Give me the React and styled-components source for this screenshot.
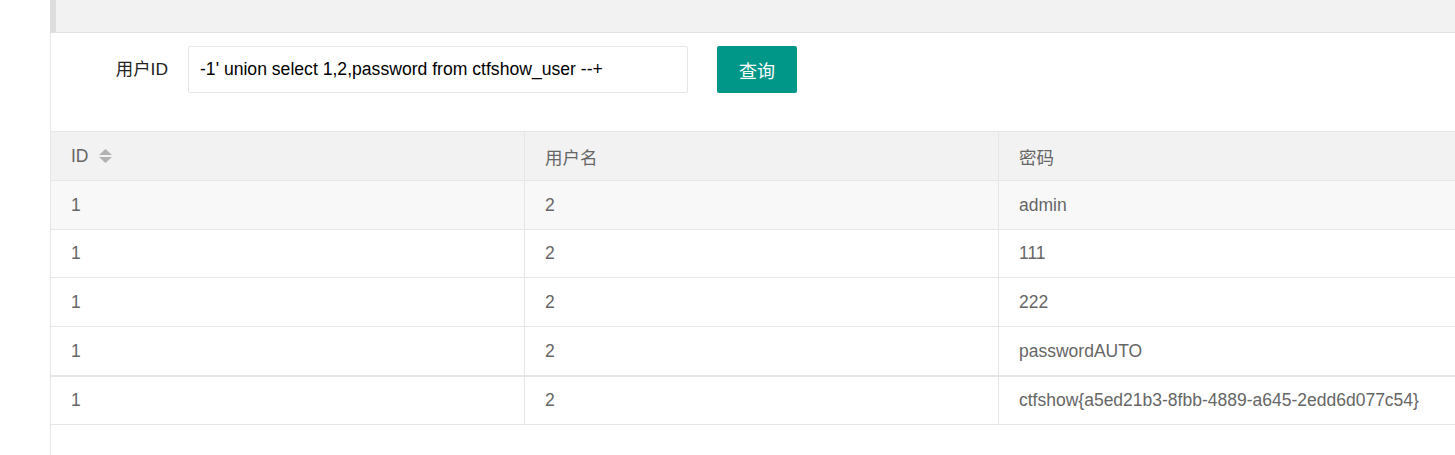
import React from 'react';
import styled, { createGlobalStyle } from 'styled-components';

const GlobalStyle = createGlobalStyle`
  html, body {
    margin: 0;
    padding: 0;
    background: #fff;
    overflow: hidden;
  }
  body {
    font-family: "Liberation Sans", Arial, "Noto Sans CJK SC", sans-serif;
  }
`;

const Page = styled.div`
  margin-left: 50px;
  height: 455px;
  border-left: 1px solid #e6e6e6;
  width: 1500px;
`;

const Quote = styled.div`
  height: 32px;
  background: #f2f2f2;
  border-left: 6px solid #dddddd;
  border-bottom: 1px solid #e2e2e2;
  margin-left: -1px;
`;

const Form = styled.form`
  display: flex;
  align-items: flex-start;
  height: 98px;
  padding-top: 13px;
  box-sizing: border-box;
`;

const Label = styled.label`
  width: 137px;
  height: 47px;
  line-height: 47px;
  text-align: right;
  font-size: 17.4px;
  color: #222;
  padding-right: 20px;
  box-sizing: border-box;
`;

const Input = styled.input`
  width: 500px;
  height: 47px;
  box-sizing: border-box;
  border: 1px solid #e6e6e6;
  border-radius: 2px;
  padding: 0 11px;
  font-family: inherit;
  font-size: 17.6px;
  color: #000;
  outline: none;
`;

const Button = styled.button`
  margin-left: 29px;
  width: 80px;
  height: 47px;
  border: none;
  border-radius: 2px;
  background: #009688;
  color: #fff;
  font-family: inherit;
  font-size: 18px;
  cursor: pointer;
`;

const Table = styled.table`
  border-collapse: collapse;
  table-layout: fixed;
  width: 1548px;
  margin-left: -1px;
  font-size: 17.5px;
  color: #666;
`;

const Th = styled.th`
  height: 48px;
  padding: 0 20px;
  text-align: left;
  font-weight: normal;
  background: #f2f2f2;
  border: 1px solid #e6e6e6;
  ${({ $fixed }) => $fixed && `
    position: relative;
    z-index: 1;
    box-shadow: 1px 0 8px rgba(0, 0, 0, 0.06);
  `}
`;

const Tr = styled.tr`
  background: ${({ $even }) => ($even ? '#f8f8f8' : '#fff')};
`;

const Td = styled.td`
  height: ${({ $h }) => $h}px;
  padding: 0 20px;
  border: 1px solid #e6e6e6;
  border-top-width: ${({ $thick }) => ($thick ? '2px' : '1px')};
  white-space: nowrap;
  ${({ $fixed }) => $fixed && `
    position: relative;
    z-index: 1;
    box-shadow: 1px 2px 8px rgba(0, 0, 0, 0.06);
  `}
`;

const HeadInner = styled.span`
  display: inline-flex;
  align-items: center;
  gap: 10px;
`;

const SortIcon = () => (
  <svg width="13" height="15" viewBox="0 0 13 15">
    <polygon points="6.5,0 13,6 0,6" fill="#b2b2b2" />
    <polygon points="0,8 13,8 6.5,14" fill="#b2b2b2" />
  </svg>
);

const rows = [
  ['1', '2', 'admin', 48],
  ['1', '2', '111', 47],
  ['1', '2', '222', 48],
  ['1', '2', 'passwordAUTO', 48],
  ['1', '2', 'ctfshow{a5ed21b3-8fbb-4889-a645-2edd6d077c54}', 47],
];

const App = () => {
  return (
    <>
      <GlobalStyle />
      <Page>
        <Quote />
        <Form onSubmit={(e) => e.preventDefault()}>
          <Label>用户ID</Label>
          <Input defaultValue="-1' union select 1,2,password from ctfshow_user --+" />
          <Button type="submit">查询</Button>
        </Form>
        <Table>
          <colgroup>
            <col style={{ width: 474 }} />
            <col style={{ width: 474 }} />
            <col style={{ width: 600 }} />
          </colgroup>
          <thead>
            <tr>
              <Th $fixed>
                <HeadInner>ID <SortIcon /></HeadInner>
              </Th>
              <Th>用户名</Th>
              <Th>密码</Th>
            </tr>
          </thead>
          <tbody>
            {rows.map((r, i) => (
              <Tr key={i} $even={i === 0}>
                <Td $fixed $h={r[3]} $thick={i === 4}>{r[0]}</Td>
                <Td $h={r[3]} $thick={i === 4}>{r[1]}</Td>
                <Td $h={r[3]} $thick={i === 4}>{r[2]}</Td>
              </Tr>
            ))}
          </tbody>
        </Table>
      </Page>
    </>
  );
};

export default App;
